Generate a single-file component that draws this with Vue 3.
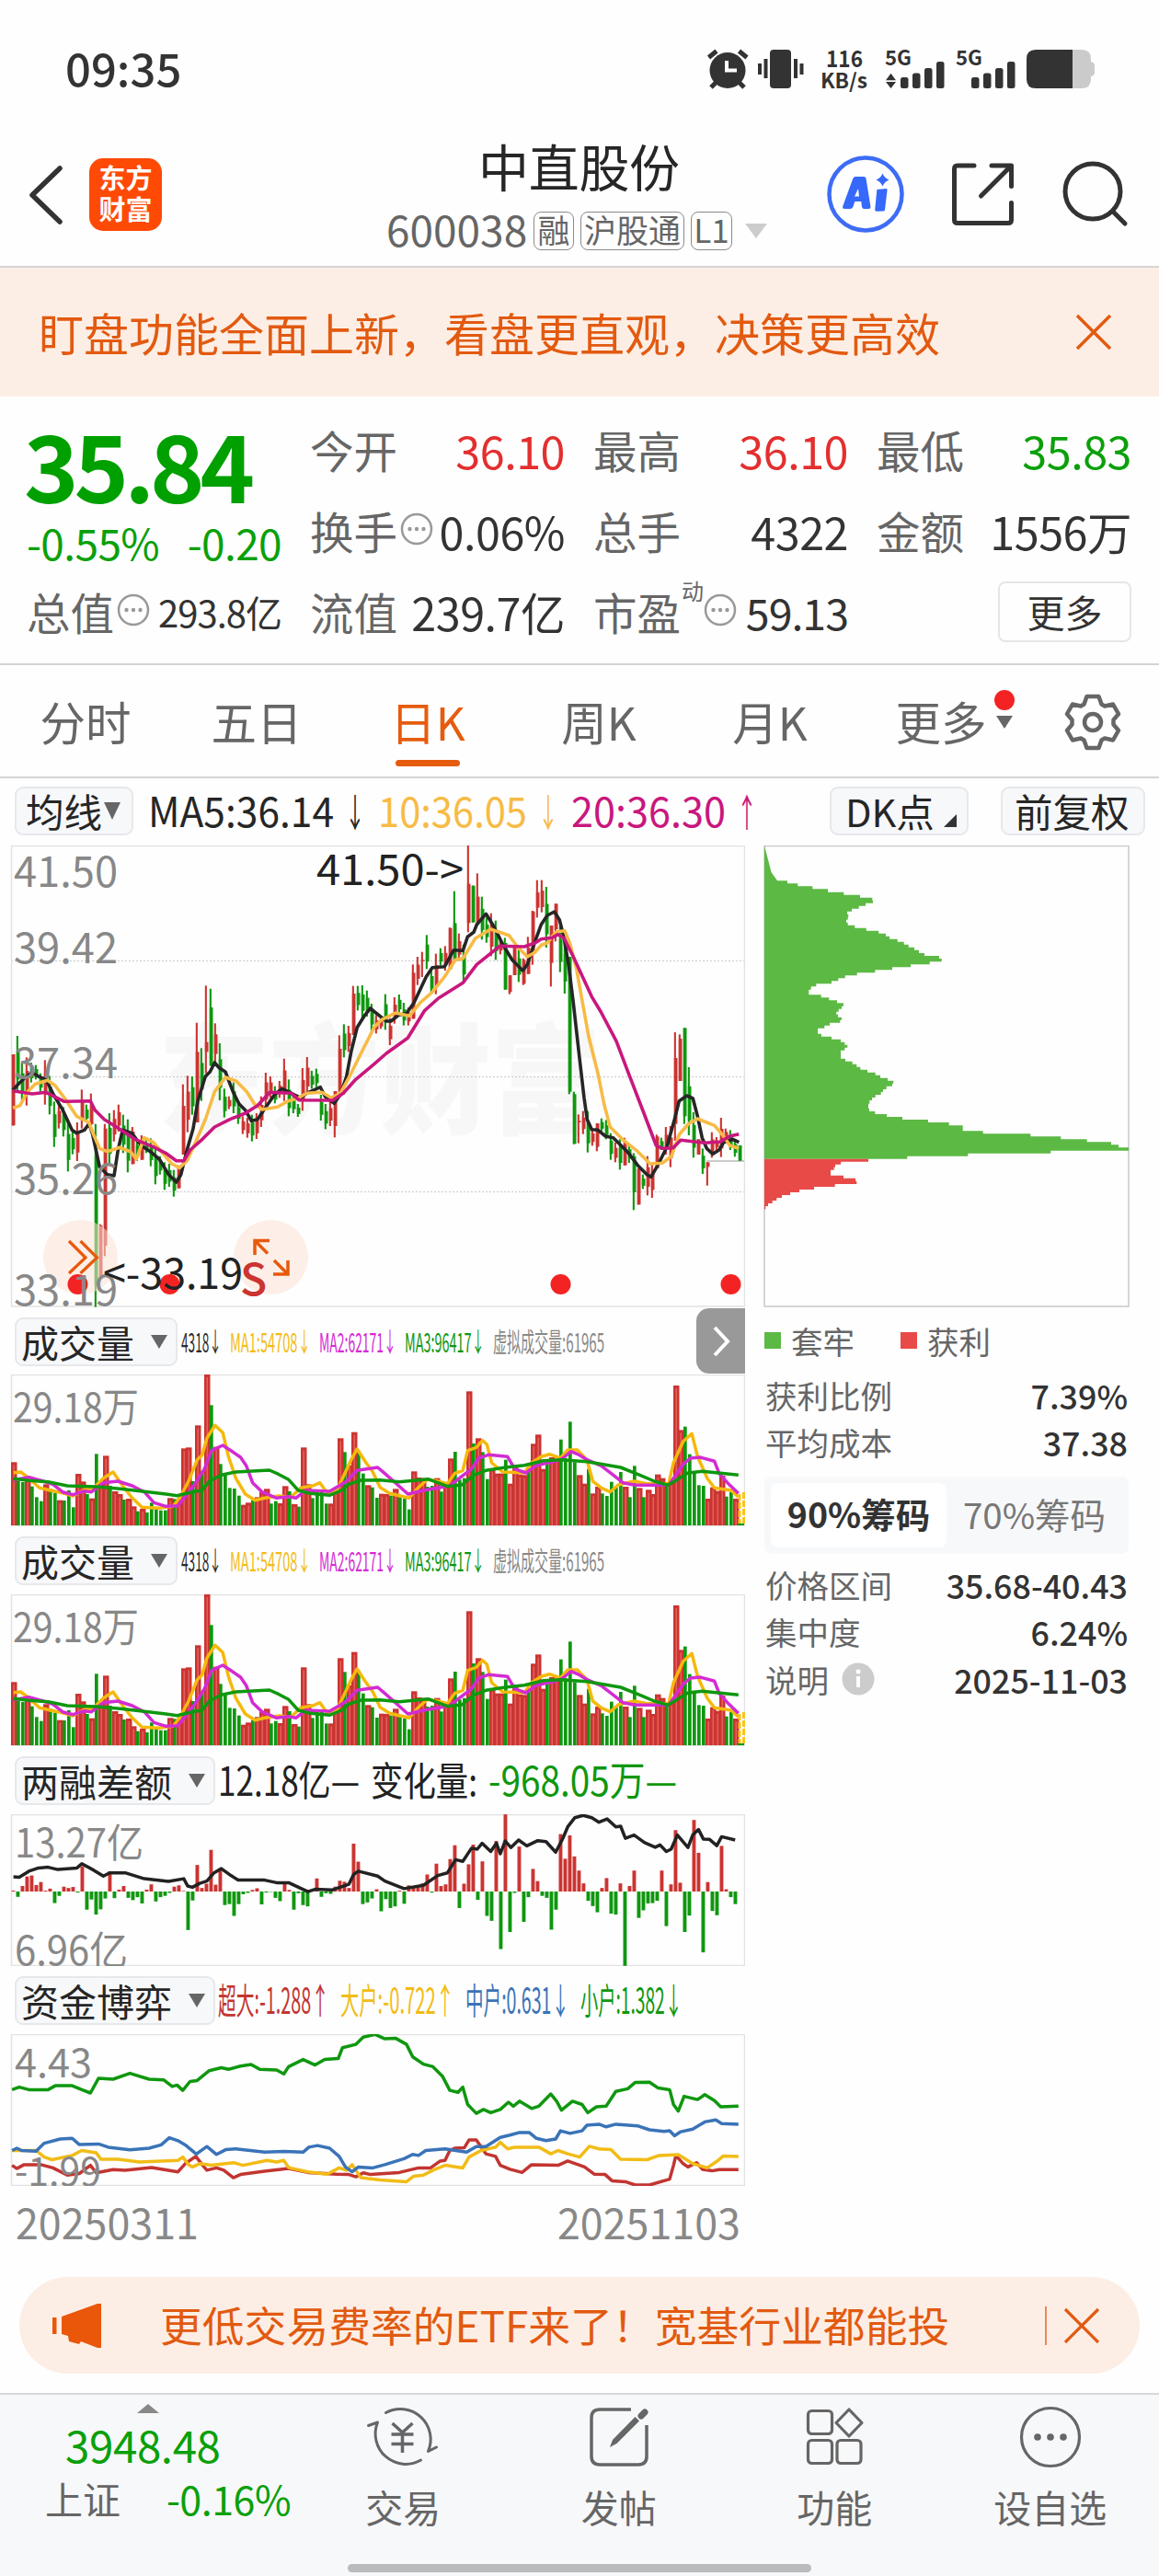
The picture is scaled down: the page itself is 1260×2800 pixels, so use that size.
<script setup>
import { h } from 'vue'

const RED = '#cb3431'
const GREEN = '#0f970f'

// Text run squeezed or stretched to an exact advance width
const Fit = (p) =>
  h('svg', { width: p.w, height: p.lh || 60, style: 'display:block;overflow:visible;flex:none' }, [
    h('text', {
      x: 0, y: p.y || 44, 'font-size': p.s, fill: p.c, 'font-weight': p.b || 400,
      textLength: p.w, lengthAdjust: 'spacingAndGlyphs'
    }, p.t)
  ])
Fit.props = ['w', 's', 'c', 't', 'b', 'y', 'lh']

const pts = (s, ox, oy, sx, sy) =>
  s.trim().split(/\s+/).map((p) => {
    const [x, y] = p.split(',').map(Number)
    return (x / sx + ox).toFixed(1) + ',' + (y / sy + oy).toFixed(1)
  }).join(' ')

/* ---- daily candles: colour high-low[:bodyTop-bodyBottom] ---- */
const candleRaw = `r708-940:708-940 g648-830 g735-858 r718-875 g735-800 g743-790 g770-830 r727-872 g778-904 g862-1010
r870-950 g880-976 g920-1090 g960-1034 r930-1056 r823-950 g872-930 r836-965 g935-1532:1040-1460 r1262-1446:1266-1440
r935-1366:950-1332 g900-1070 r890-992 r872-960 g905-1030 g920-1093 r945-1066:960-1066 g985-1056 r972-1052:1000-1052 g985-1030
g982-1073 g1010-1132 g1040-1100 g1060-1150 g1065-1140 g1085-1172 r1070-1145:1075-1145 r806-1035:876-1035 r778-962 g780-905
r605-930:700-930 g688-860 r484-770:668-700 g494-745:555-745 r607-735 g672-858 g820-914 r845-887 g800-900 g860-935
r910-968 r915-980 g905-992 r900-984 r845-945 r768-880 r780-850 g812-868 r795-850 r722-860
g790-910 g840-900 g870-912 r753-892 r717-840 g762-820 g755-815 g840-924 g870-952 r860-942
r828-979:828-942 r646-830:690-830 g610-718 r615-700 r485-645:510-645 g485-565 g483-590 g500-585 g543-630 r580-640
r590-625 g512-628 r590-678 r522-608 g513-575 g540-614 r555-614 r415-592:442-592 r390-482 r374-456:400-404
g319-430 g430-512 r380-512 g362-418 r355-435 r295-430:296-430 g176-400:280-400 r314-403 g350-475 r27-310:152-280
g158-278:158-278 r118-280:194-280 g194-334 g262-344 r248-388 g272-400 r325-382 g328-497:345-497 r450-512:450-505 r355-450:360-450
g365-472 r395-482:400-478 r325-446:360-446 r240-416:242-370 r140-262:180-230 r140-245:174-228 g162-360 r288-487:288-410 r217-340:217-300 g290-440
g330-510 g390-838:390-830 g830-1001:838-1000 r904-998:925-930 r893-968 g893-1028 r950-1006 r933-1024:933-1010 g917-960 g922-985
g965-1052 r995-1060 g985-1084 r980-1070:1000-1070 g1000-1062 g1030-1216:1040-1158 r1080-1198:1082-1198 g1100-1147 r1040-1168 r1060-1176
r970-1080:976-1080 g980-1020 r945-1035 r942-1076 r636-990:720-935 r643-795:657-795 g622-935:622-910 g750-972 g897-1045 r985-1035:985-1035
g1015-1098 r1060-1136:1060-1075 r962-1045 r978-1020 r915-1043 r950-990 g955-1020 g985-1042 g1005-1055:1005-1055`
const candles = candleRaw.trim().split(/\s+/).map((s, i) => {
  const c = s[0] === 'r' ? RED : GREEN
  const [wick, body] = s.slice(1).split(':')
  const [a, b] = wick.split('-').map(Number)
  const len = b - a
  const [p, q] = body ? body.split('-').map(Number) : [a + len * 0.28, b - len * 0.22]
  return { c, x: 14 + 5 * i, y1: 910 + a / 3, y2: 910 + b / 3, b1: 910 + p / 3, b2: 910 + q / 3 }
})
const kl = (s) => pts(s, 0, 910, 3, 3)
const ma = [
  [kl('42,825 60,805 80,785 105,768 125,780 150,790 175,840 205,890 235,955 250,965 275,955 290,935 300,960 325,1075 350,1100 372,1104 385,1020 400,955 430,965 460,1005 490,1025 520,1050 550,1100 575,1125 590,1100 610,1020 630,950 645,860 670,780 685,765 700,735 715,752 735,765 760,830 780,870 800,890 820,925 840,920 860,890 895,840 920,820 950,835 980,850 1000,835 1045,815 1060,845 1090,868 1110,840 1130,780 1145,700 1165,620 1190,580 1208,558 1220,568 1260,600 1275,600 1300,580 1325,575 1350,540 1390,455 1410,425 1450,422 1480,368 1510,370 1525,325 1545,310 1555,285 1585,250 1610,290 1640,350 1670,400 1705,435 1720,415 1745,340 1765,285 1785,255 1808,243 1825,270 1840,330 1855,420 1870,540 1890,720 1905,850 1915,920 1930,953 1950,955 1975,975 2000,980 2020,1000 2050,1030 2080,1070 2110,1100 2123,1108 2145,1070 2175,1010 2200,920 2215,860 2240,843 2260,852 2275,910 2290,980 2305,1015 2325,1033 2345,1020 2360,995 2390,985 2410,995'), '#262626'],
  [kl('42,883 65,875 90,830 115,805 155,793 180,810 210,850 250,910 290,930 305,970 325,1015 350,1025 390,1012 425,1025 445,1050 470,980 500,995 530,1030 560,1065 585,1078 610,1055 640,990 670,920 700,830 735,783 770,795 805,830 830,870 855,888 905,880 940,860 970,852 1000,835 1050,832 1080,850 1110,835 1140,780 1180,700 1220,620 1245,595 1290,573 1335,583 1370,540 1410,505 1450,455 1485,400 1510,395 1550,330 1600,300 1660,320 1690,360 1720,390 1745,375 1765,352 1785,345 1800,325 1815,308 1842,305 1860,350 1880,430 1900,540 1920,650 1950,770 1970,870 1990,945 2030,985 2080,1025 2120,1065 2160,1063 2190,1040 2215,970 2245,935 2275,918 2330,940 2360,975 2380,1005 2410,1015'), '#f7bb45'],
  [kl('42,827 105,837 150,832 210,862 295,860 310,890 340,920 380,945 440,985 500,1010 540,1030 575,1055 600,1055 620,1020 660,985 700,945 750,920 800,900 840,875 880,832 950,835 975,857 1085,858 1120,835 1160,790 1220,740 1260,705 1330,655 1385,565 1430,525 1510,475 1555,415 1630,355 1710,357 1745,345 1765,332 1800,328 1820,317 1840,330 1870,390 1930,520 1960,570 2010,665 2050,770 2100,900 2140,1005 2160,1015 2195,1013 2220,988 2300,997 2350,993 2380,975 2410,968'), '#c9177e']
]

/* ---- volume ---- */
const volRaw = `508r 570g 573g 560r 587g 622g 635g 580r 595g 608g 632r 633g 600g 655g 546r 571r 612g 626r 481g 575r
487r 585g 603r 612r 630g 627r 652r 668g 660r 672g 640g 657g 665g 665g 625r 628g 628r 463r 460r 570g
388r 538g 222r 322g 458r 514g 545g 592g 594g 617g 647r 640r 632g 622r 605r 595r 643g 635g 642r 586r
603g 645r 653g 460r 580r 625g 602g 597g 643g 643r 592r 430r 475g 518r 410r 470g 545g 583r 590g 624g
611r 612r 617g 595r 622g 627g 662g 538r 558r 560r 588g 585g 560r 604g 582r 496r 474g 565g 560g 277r
447g 430r 475g 563g 530r 545r 545r 500g 578r 520r 548r 550r 535g 448r 418r 530r 515g 492r 500r 434g
495g 376g 508g 550r 578r 530g 610r 588r 610g 618g 572g 590g 540g 588r 622g 520g 592r 622g 598r 612r
548r 560r 580g 575r 258r 403r 392g 482g 540g 583g 585g 627r 590r 602r 552r 620g 605g 627r`
const volBars = volRaw.trim().split(/\s+/).map((s, i) => {
  const up = s.endsWith('r')
  const y = 1420 + parseInt(s) / 3
  return { x: 12 + 5 * i, y, hh: 1658 - y, up }
})
const vl = (s) => pts(s, 0, 1420, 1.912, 3)
const volMa = [
  [vl('28,542 43,540 60,560 82,592 105,600 130,608 152,618 175,598 195,592 215,560 235,540 255,585 275,625 295,655 330,658 360,652 375,620 392,570 410,500 420,485 430,430 447,388 463,412 475,490 490,560 510,612 530,632 550,625 580,618 605,622 625,592 650,585 665,575 680,608 700,600 712,560 730,500 742,465 760,508 775,540 790,590 810,610 850,625 870,590 888,565 910,570 930,578 945,545 962,535 972,470 990,460 1003,437 1012,450 1022,510 1045,540 1090,542 1105,510 1125,490 1142,482 1165,495 1180,468 1200,468 1220,500 1232,570 1250,592 1268,605 1285,582 1318,570 1345,578 1390,578 1400,510 1420,440 1438,415 1450,490 1470,560 1485,592 1520,600 1535,622'), '#f5b90c'],
  [vl('28,566 60,557 90,570 110,580 130,605 152,614 175,602 190,605 215,575 245,570 275,585 300,605 320,640 345,652 370,650 390,610 405,580 425,530 440,470 463,453 480,470 500,492 512,520 525,575 545,605 575,625 600,620 615,625 635,600 685,603 705,585 720,570 742,535 785,525 800,545 825,580 848,612 880,600 935,585 955,560 980,530 995,495 1015,484 1055,490 1070,530 1093,543 1115,518 1155,505 1170,495 1187,473 1205,485 1220,500 1250,520 1275,550 1295,575 1320,583 1390,583 1405,550 1420,515 1435,495 1455,492 1485,505 1495,545 1515,580 1535,610'), '#d32bd3'],
  [vl('28,562 60,568 100,572 140,585 200,588 250,595 300,604 345,612 368,617 400,605 420,600 435,570 460,550 490,540 560,534 580,548 600,565 620,600 645,610 685,616 710,600 725,580 750,567 790,566 830,572 890,563 930,587 960,582 985,550 1010,535 1050,525 1090,518 1130,503 1165,500 1220,506 1290,525 1330,550 1360,570 1388,583 1400,572 1430,543 1460,538 1535,550'), GREEN]
]

/* ---- margin balance ---- */
const marginBars = [434,453,420,391,388,417,408,434,428,472,450,422,426,423,440,360,492,461,507,491,458,375,457,431,420,456,463,454,473,431,415,467,454,450,441,422,418,435,554,464,356,426,413,310,416,372,478,475,511,475,445,441,432,427,476,440,438,456,466,408,432,492,442,478,482,434,397,453,442,444,422,404,407,426,291,346,475,470,458,430,497,460,487,482,434,474,418,422,424,412,385,440,352,420,415,338,296,487,413,354,294,462,345,511,526,283,612,202,560,441,300,529,454,368,405,450,456,553,492,262,337,266,330,373,412,465,481,500,426,396,504,507,412,663,420,373,517,494,473,472,465,373,542,415,250,410,560,510,219,319,622,408,496,509,298,430,454,475]
  .map((v, i) => {
    const y = 1900 + v / 2.8
    const up = v < 437
    return { x: 12.5 + 5 * i, y: up ? y : 2056, hh: Math.abs(y - 2056), c: up ? RED : GREEN }
  })
const fl = (s) => pts(s, 0, 1900, 1.912, 2.8)
const marginLine = fl('28,392 40,393 60,375 80,365 100,363 120,370 160,365 170,352 195,372 215,390 228,380 260,380 300,398 350,406 382,398 390,420 400,424 415,412 430,405 445,380 460,367 480,388 495,402 550,402 575,410 600,410 640,437 655,430 690,432 725,415 735,385 745,375 785,390 800,405 840,428 880,418 910,388 930,380 947,340 962,345 980,305 992,308 1002,290 1020,315 1032,290 1040,322 1050,283 1062,303 1078,280 1095,298 1118,282 1135,285 1155,317 1170,275 1180,240 1195,212 1212,205 1230,212 1245,226 1262,216 1280,240 1290,238 1300,275 1318,265 1340,288 1362,302 1372,295 1385,315 1395,308 1408,265 1430,303 1440,265 1452,248 1462,277 1475,278 1490,297 1500,270 1528,280')

/* ---- fund flow ---- */
const fund = [
  [fl('25,1270 35,1280 50,1268 85,1268 110,1278 140,1300 165,1295 188,1270 200,1293 235,1283 260,1285 315,1277 370,1290 385,1265 407,1243 420,1268 430,1285 450,1278 465,1285 485,1308 500,1298 550,1288 600,1280 640,1292 700,1297 725,1298 740,1305 755,1293 770,1298 830,1292 870,1278 895,1278 915,1257 925,1255 935,1225 945,1218 965,1217 975,1193 990,1193 1010,1235 1030,1243 1040,1270 1060,1282 1085,1292 1105,1268 1160,1270 1180,1257 1215,1275 1235,1297 1258,1298 1272,1317 1300,1320 1320,1330 1350,1330 1392,1312 1400,1270 1405,1240 1420,1265 1430,1275 1448,1262 1460,1282 1480,1287 1495,1283 1535,1283'), '#c23531'],
  [fl('25,1225 75,1225 92,1245 108,1253 150,1240 170,1225 200,1232 210,1252 245,1252 290,1260 370,1255 380,1245 392,1268 400,1275 415,1265 440,1270 485,1262 505,1270 555,1255 575,1260 590,1255 600,1277 640,1290 680,1297 705,1278 720,1285 732,1268 750,1308 790,1315 845,1320 860,1303 880,1300 900,1285 925,1270 962,1278 975,1245 1000,1225 1030,1215 1040,1200 1055,1220 1070,1215 1120,1215 1145,1235 1160,1225 1180,1235 1205,1245 1225,1212 1245,1220 1270,1222 1290,1252 1345,1253 1370,1240 1410,1238 1440,1265 1470,1278 1490,1258 1503,1242 1535,1243'), '#f2bc16'],
  [fl('25,1225 35,1218 45,1225 75,1227 92,1203 125,1190 150,1188 165,1207 205,1205 225,1215 270,1223 310,1218 335,1208 352,1186 370,1195 385,1208 408,1236 430,1213 450,1237 470,1222 490,1220 550,1230 590,1228 630,1230 642,1215 660,1210 685,1218 705,1243 718,1275 732,1290 745,1275 775,1278 800,1268 840,1250 858,1237 870,1240 885,1225 925,1220 970,1230 990,1213 1010,1213 1040,1185 1060,1178 1080,1170 1100,1170 1115,1188 1135,1195 1155,1190 1165,1165 1185,1173 1210,1165 1220,1148 1245,1145 1260,1153 1280,1145 1325,1150 1350,1162 1380,1167 1392,1165 1402,1180 1415,1168 1440,1160 1465,1138 1488,1132 1500,1143 1535,1145'), '#3a73b8'],
  [fl('25,1040 40,1032 60,1040 100,1040 115,1028 150,1028 170,1040 188,1050 205,1005 235,1008 270,990 310,1008 340,1010 358,1030 368,1026 380,1042 395,1015 410,1012 435,982 460,973 475,978 500,968 522,963 540,978 575,980 590,992 600,970 630,948 655,965 675,948 703,945 712,912 740,902 755,880 780,872 800,885 822,883 845,902 858,940 880,962 900,970 920,1000 935,1042 952,1048 962,1032 972,1085 990,1112 1005,1100 1020,1110 1040,1100 1057,1078 1067,1090 1080,1075 1105,1097 1120,1090 1145,1053 1157,1075 1167,1102 1190,1075 1210,1085 1222,1110 1240,1092 1260,1090 1280,1045 1305,1037 1320,1018 1350,1017 1368,1035 1392,1040 1400,1085 1410,1105 1422,1060 1450,1070 1465,1055 1485,1073 1498,1092 1535,1090'), GREEN]
]

/* ---- chip distribution: bottom edge of each row, row length ---- */
const chipRaw = '151:138 160:172 169:220 179:270 188:322 197:375 206:415 215:417 224:393 233:371 242:348 251:333 260:337 269:335 278:330 287:335 296:358 305:395 314:436 323:459 332:471 341:497 350:518 359:533 368:552 378:567 387:585 396:633 406:641 415:602 424:540 433:480 442:424 451:365 460:326 469:304 478:282 487:232 497:215 514:208 523:248 532:274 541:300 551:321 560:315 569:305 578:298 587:303 596:315 605:310 614:276 623:259 641:237 650:249 659:282 668:312 677:325 686:334 695:325 722:312 731:327 740:350 749:364 758:376 767:399 776:425 785:441 794:465 803:484 812:480 822:461 831:450 840:443 849:425 858:414 869:406 885:402 894:405 903:424 912:462 921:513 930:597 940:665 958:710 967:776 976:931 985:1030 994:1115 1003:1194 1012:1218 1022:1251 1031:997 1040:727 1049:529'
const chipRedRaw = '1058:402 1067:312 1076:294 1085:290 1103:279 1112:321 1121:360 1131:364 1140:293 1149:225 1158:177 1167:147 1176:120 1185:103 1194:89 1203:75 1213:67'
const steps = (raw, y0) => {
  let d = ''
  for (const r of raw.split(' ')) {
    const [b, x] = r.split(':').map(Number)
    d += `H${(810 + x / 3).toFixed(1)}V${(910 + b / 3).toFixed(1)}`
  }
  return d + `H831V${(910 + y0 / 3).toFixed(1)}Z`
}
const chipGreen = 'M831 919L838.5 948L845 957.3' + steps(chipRaw, 28)
const chipRed = 'M831 1259.7' + steps(chipRedRaw, 1049)

const volLegend = [
  { t: '4318↓', w: 44, c: '#2b2b2b' },
  { t: 'MA1:54708↓', w: 88, c: '#f2bc16' },
  { t: 'MA2:62171↓', w: 84, c: '#d32bd3' },
  { t: 'MA3:96417↓', w: 87, c: '#0f970f' },
  { t: '虚拟成交量:61965', w: 121, c: '#888' }
]
const fundLegend = [
  { t: '超大:-1.288↑', w: 121, c: '#c23531' },
  { t: '大户:-0.722↑', w: 124, c: '#f2bc16' },
  { t: '中户:0.631↓', w: 113, c: '#3a73b8' },
  { t: '小户:1.382↓', w: 111, c: '#0f970f' }
]
const quotes = [
  ['今开', '36.10', 'up'], ['最高', '36.10', 'up'], ['最低', '35.83', 'down'],
  ['换手', '0.06%', '', 1], ['总手', '4322', ''], ['金额', '1556万', '']
]
const axis = [['41.50', 964], ['39.42', 1047], ['37.34', 1172], ['35.26', 1298], ['33.19', 1419]]
</script>

<template>
  <div class="app">
    <div class="status">
      <span class="time">09:35</span>
      <svg class="status-icons" width="426" height="60" viewBox="766 44 426 60">
        <g fill="#333">
          <circle cx="791" cy="76.500" r="19.500" />
          <g stroke="#333" stroke-width="5" fill="none">
            <path d="M770.500 62.500L779 55.500M803.500 55.500L812 62.500M780 88L773 95M802 88L809 95" />
          </g>
          <path d="M790 66v10.500h11" stroke="#fff" stroke-width="4" fill="none" />
          <rect x="837" y="54" width="23" height="42" rx="4" />
          <rect x="824" y="69" width="4" height="12" /><rect x="830.500" y="64" width="4" height="21" />
          <rect x="863" y="64" width="4" height="21" /><rect x="869.500" y="69" width="4" height="12" />
          <text x="898" y="73" font-size="25" font-weight="700" textLength="40" lengthAdjust="spacingAndGlyphs">116</text>
          <text x="892" y="96" font-size="22" font-weight="700" textLength="51" lengthAdjust="spacingAndGlyphs">KB/s</text>
          <text x="962" y="70.500" font-size="22" font-weight="700" textLength="29" lengthAdjust="spacingAndGlyphs">5G</text>
          <text x="1039" y="70.500" font-size="22" font-weight="700" textLength="29" lengthAdjust="spacingAndGlyphs">5G</text>
          <path d="M963 87.300l5.500-7.500l5.500 7.500zM963 89l5.500 7l5.500-7z" />
          <rect x="979" y="84" width="8.500" height="12" rx="2.500" /><rect x="992" y="79.500" width="8.500" height="16.500" rx="2.500" />
          <rect x="1005" y="74" width="8.500" height="22" rx="2.500" /><rect x="1018" y="67" width="8.500" height="29" rx="2.500" />
          <rect x="1056" y="84" width="8.500" height="12" rx="2.500" /><rect x="1069" y="79.500" width="8.500" height="16.500" rx="2.500" />
          <rect x="1082" y="74" width="8.500" height="22" rx="2.500" /><rect x="1095" y="67" width="8.500" height="29" rx="2.500" />
        </g>
        <path d="M1160 54h16q10 0 10 10v3q4 1 4 4v8q0 3-4 4v3q0 10-10 10h-16z" fill="#cbcbcb" />
        <path d="M1166 54h-40q-10 0-10 10v22q0 10 10 10h40z" fill="#333" />
      </svg>
    </div>

    <header class="header">
      <svg class="back" width="40" height="66" viewBox="0 0 40 66"><path d="M35 4L5 33L35 62" fill="none" stroke="#333" stroke-width="5.500" stroke-linejoin="round" stroke-linecap="round" /></svg>
      <div class="logo"><span>东方</span><span>财富</span></div>
      <div class="title-box">
        <div class="title">中直股份</div>
        <div class="code-row">
          <span class="code">600038</span>
          <span class="badge b1">融</span><span class="badge b2">沪股通</span><span class="badge b3">L1</span>
          <svg class="drop" width="26" height="18" viewBox="0 0 26 18"><path d="M1 1h24L13 17z" fill="#ccc" /></svg>
        </div>
      </div>
      <svg class="ai" width="86" height="86" viewBox="898 168 86 86">
        <circle cx="941" cy="211" r="39.500" fill="none" stroke="#3d6cf5" stroke-width="4.500" />
        <path d="M930 192h9q2 0 2.500 2l5 31q0 2-2 2h-5q-2 0-2.500-2l-.7-6h-7l-2 6q-1 2-3 2h-6q-3 0-2-3l11-30q1-2 2.700-2zM933 205l-4 8.500h5z" fill="#3668fb" />
        <path d="M953.500 206l10-1q1.500 0 1 2l-2.500 21q-.3 1.500-2 1.500l-7 .3q-2 0-1.800-2l2-20q0-2 .3-1.800z" fill="#3668fb" />
        <path d="M959.500 188.500q2 5 7 7q-5 2-7 7q-2-5-7-7q5-2 7-7z" fill="#3668fb" />
      </svg>
      <svg class="share" width="74" height="74" viewBox="1031 175 74 74" fill="none" stroke="#333" stroke-width="5" stroke-linecap="round" stroke-linejoin="round">
        <path d="M1059 180h-18q-3.500 0-3.500 3.500v55.500q0 3.500 3.500 3.500h55q3.500 0 3.500-3.500v-18.500M1078 180h21.500v22.500M1099 180.500L1066.500 213" />
      </svg>
      <svg class="search" width="74" height="74" viewBox="1154 173 74 74" fill="none" stroke="#333" stroke-width="5" stroke-linecap="round">
        <circle cx="1188" cy="208" r="30" /><path d="M1210 230L1223 243" />
      </svg>
    </header>

    <div class="notice">
      <span>盯盘功能全面上新，看盘更直观，决策更高效</span>
      <svg width="40" height="40" viewBox="0 0 40 40"><path d="M2 2L38 38M38 2L2 38" stroke="#e25a10" stroke-width="3.500" /></svg>
    </div>

    <section class="quotes">
      <div class="price-box">
        <div class="price">35.84</div>
        <div class="change"><span>-0.55%</span><span>-0.20</span></div>
      </div>
      <div v-for="q in quotes" :key="q[0]" class="cell">
        <span class="label">{{ q[0] }}</span>
        <svg v-if="q[3]" class="more-dot" width="36" height="36" viewBox="0 0 36 36"><circle cx="18" cy="18" r="16" fill="none" stroke="#999" stroke-width="2.500" /><g fill="#999"><circle cx="10.500" cy="18" r="2.200" /><circle cx="18" cy="18" r="2.200" /><circle cx="25.500" cy="18" r="2.200" /></g></svg>
        <span class="val" :class="q[2]">{{ q[1] }}</span>
      </div>
      <div class="cell">
        <span class="label">总值</span>
        <svg class="more-dot" width="36" height="36" viewBox="0 0 36 36"><circle cx="18" cy="18" r="16" fill="none" stroke="#999" stroke-width="2.500" /><g fill="#999"><circle cx="10.500" cy="18" r="2.200" /><circle cx="18" cy="18" r="2.200" /><circle cx="25.500" cy="18" r="2.200" /></g></svg>
        <span class="val small">293.8亿</span>
      </div>
      <div class="cell"><span class="label">流值</span><span class="val">239.7亿</span></div>
      <div class="cell">
        <span class="label">市盈</span><sup class="dyn">动</sup>
        <svg class="more-dot tight" width="36" height="36" viewBox="0 0 36 36"><circle cx="18" cy="18" r="16" fill="none" stroke="#999" stroke-width="2.500" /><g fill="#999"><circle cx="10.500" cy="18" r="2.200" /><circle cx="18" cy="18" r="2.200" /><circle cx="25.500" cy="18" r="2.200" /></g></svg>
        <span class="val pe">59.13</span>
      </div>
      <div class="cell end"><button class="more-btn">更多</button></div>
    </section>

    <nav class="tabs">
      <span class="tab">分时</span><span class="tab">五日</span><span class="tab active">日K</span>
      <span class="tab">周K</span><span class="tab">月K</span>
      <span class="tab more">更多<i class="dot"></i><svg class="tri" width="20" height="16" viewBox="0 0 20 16"><path d="M1 1h18L10 15z" fill="#666" /></svg></span>
      <svg class="gear" width="66" height="66" viewBox="-33 -33 66 66" fill="none" stroke="#666" stroke-width="4.500" stroke-linejoin="round">
        <path d="M-6.500 -28H6.500L9.500 -19.500L13 -17.500L22 -19.500L28 -9L22.500 -2.500V2.500L28 9L22 19.500L13 17.500L9.500 19.500L6.500 28H-6.500L-9.500 19.500L-13 17.500L-22 19.500L-28 9L-22.500 2.500V-2.500L-28 -9L-22 -19.500L-13 -17.500L-9.500 -19.500Z" />
        <circle r="9" />
      </svg>
    </nav>

    <div class="ma-row">
      <span class="pill">均线<svg width="18" height="20" viewBox="0 0 18 20"><path d="M0 1h18L9 20z" fill="#666" /></svg></span>
      <Fit class="m1" t="MA5:36.14" :w="202" :s="45" c="#262626" :y="45" /><Fit t="↓" :w="22" :s="42" c="#262626" :y="45" class="ar" />
      <Fit class="m2" t="10:36.05" :w="162" :s="45" c="#f7bb45" :y="45" /><Fit t="↓" :w="22" :s="42" c="#f7bb45" :y="45" class="ar" />
      <Fit class="m2" t="20:36.30" :w="168" :s="45" c="#c9177e" :y="45" /><Fit t="↑" :w="22" :s="42" c="#c9177e" :y="45" class="ar" />
      <span class="pill dk">DK点<svg width="14" height="14" viewBox="0 0 14 14"><path d="M14 0v14H0z" fill="#333" /></svg></span>
      <span class="pill fq">前复权</span>
    </div>

    <main class="charts">
      <div class="left">
        <svg class="k-chart" width="810" height="502" viewBox="0 919 810 502">
          <text x="172" y="1222" font-size="130" font-weight="900" fill="#f7f7f7" textLength="482" lengthAdjust="spacingAndGlyphs">东方财富</text>
          <g stroke="#c9c9c9" stroke-width="1" stroke-dasharray="2 2">
            <path d="M12 1044.500H809M12 1170.500H809M12 1295.500H809" />
          </g>
          <rect x="12.500" y="919.500" width="797" height="500.500" fill="none" stroke="#e2e2e2" stroke-width="1.500" />
          <path d="M768 1262H809" stroke="#ccc" stroke-width="2" />
          <g v-for="(c, i) in candles" :key="i" :fill="c.c">
            <rect :x="c.x - 1.200" :y="c.y1" width="2.100" :height="c.y2 - c.y1" />
            <rect :x="c.x - 1.200" :y="c.b1" width="3.700" :height="c.b2 - c.b1" />
          </g>
          <polyline v-for="m in ma" :key="m[1]" :points="m[0]" fill="none" :stroke="m[1]" stroke-width="3.600" stroke-linejoin="round" />
          <g fill="rgba(252,225,211,.55)"><circle cx="87.500" cy="1366.500" r="40.500" /><circle cx="294.500" cy="1366.500" r="40.500" /></g>
          <path d="M75 1349l18 18l-18 17M87.500 1349l18 18l-18 17" fill="none" stroke="#e8590c" stroke-width="3.200" />
          <path d="M277 1364v-15.500h16M277 1348.500l14 14M313 1370v15h-16M313 1385l-15-15" fill="none" stroke="#e8590c" stroke-width="3.500" />
          <g fill="#f42323"><circle cx="84.500" cy="1396" r="11" /><circle cx="184.500" cy="1396" r="11" /><circle cx="609.500" cy="1396" r="11" /><circle cx="794.500" cy="1396" r="11" /></g>
          <g font-size="46" fill="#888">
            <text v-for="a in axis" :key="a[0]" x="15" :y="a[1]" textLength="113" lengthAdjust="spacingAndGlyphs">{{ a[0] }}</text>
          </g>
          <g font-size="46" fill="#222">
            <text x="344" y="962" textLength="160" lengthAdjust="spacingAndGlyphs">41.50-&gt;</text>
            <text x="112" y="1401" textLength="152" lengthAdjust="spacingAndGlyphs">&lt;-33.19</text>
          </g>
          <text x="261" y="1408" font-size="48" font-weight="500" fill="#cb3431">S</text>
        </svg>

        <template v-for="n in 2" :key="n">
          <div class="ind-head">
            <span class="pill ind">成交量<svg width="18" height="15" viewBox="0 0 18 15"><path d="M0 0h18L9 15z" fill="#666" /></svg></span>
            <div class="legend">
              <Fit v-for="l in volLegend" :key="l.t" :t="l.t" :w="l.w" :s="29" :c="l.c" :y="38" />
            </div>
            <div v-if="n === 1" class="expand"><svg width="20" height="34" viewBox="0 0 20 34"><path d="M3 2L17 17L3 32" fill="none" stroke="#fff" stroke-width="4" /></svg></div>
          </div>
          <svg class="sub" width="810" height="165" viewBox="0 1494 810 165">
            <rect x="12.500" y="1494.500" width="797" height="164" fill="none" stroke="#e2e2e2" stroke-width="1.500" />
            <g v-for="(b, i) in volBars" :key="i">
              <rect v-if="b.up" :x="b.x" :y="b.y" width="6.500" :height="b.hh" fill="#cb3431" />
              <rect v-if="b.up" :x="b.x + 2.500" :y="b.y + 3" width="1.500" :height="b.hh - 3" fill="#e2605c" />
              <rect v-if="!b.up" :x="b.x + 1" :y="b.y" width="3.700" :height="b.hh" :fill="GREEN" />
            </g>
            <g fill="none" stroke="#fbc316" stroke-width="3" stroke-dasharray="7 2"><path d="M804 1624V1658M808.500 1622V1658" /></g>
            <rect x="802" y="1656" width="7" height="2" fill="#0f970f" />
            <polyline v-for="m in volMa" :key="m[1]" :points="m[0]" fill="none" :stroke="m[1]" stroke-width="3.500" stroke-linejoin="round" />
            <text x="14" y="1546" font-size="44" fill="#888" textLength="137" lengthAdjust="spacingAndGlyphs">29.18万</text>
          </svg>
        </template>

        <div class="ind-head">
          <span class="pill ind wide">两融差额<svg width="18" height="15" viewBox="0 0 18 15"><path d="M0 0h18L9 15z" fill="#666" /></svg></span>
          <div class="legend big">
            <Fit t="12.18亿—" :w="154" :s="44" c="#222" :y="45" />
            <Fit t="变化量:" :w="116" :s="43" c="#222" :y="45" />
            <Fit t="-968.05万—" :w="205" :s="44" c="#0f970f" :y="45" />
          </div>
        </div>
        <svg class="sub" width="810" height="165" viewBox="0 1972 810 165">
          <rect x="12.500" y="1972.500" width="797" height="164" fill="none" stroke="#e2e2e2" stroke-width="1.500" />
          <rect v-for="(b, i) in marginBars" :key="i" :x="b.x" :y="b.y" width="3.900" :height="b.hh" :fill="b.c" />
          <polyline :points="marginLine" fill="none" stroke="#222" stroke-width="3.500" stroke-linejoin="round" />
          <text x="16" y="2019" font-size="43" fill="#888" textLength="140" lengthAdjust="spacingAndGlyphs">13.27亿</text>
          <text x="16" y="2136" font-size="43" fill="#888" textLength="123" lengthAdjust="spacingAndGlyphs">6.96亿</text>
        </svg>

        <div class="ind-head">
          <span class="pill ind wide">资金博弈<svg width="18" height="15" viewBox="0 0 18 15"><path d="M0 0h18L9 15z" fill="#666" /></svg></span>
          <div class="legend big">
            <Fit v-for="l in fundLegend" :key="l.t" :t="l.t" :w="l.w" :s="39" :c="l.c" :y="43" />
          </div>
        </div>
        <svg class="sub" width="810" height="165" viewBox="0 2211 810 165">
          <rect x="12.500" y="2211.500" width="797" height="164" fill="none" stroke="#e2e2e2" stroke-width="1.500" />
          <polyline v-for="m in fund" :key="m[1]" :points="m[0]" fill="none" :stroke="m[1]" stroke-width="3.500" stroke-linejoin="round" />
          <text x="16" y="2258" font-size="43" fill="#888" textLength="84" lengthAdjust="spacingAndGlyphs">4.43</text>
          <text x="16" y="2376" font-size="43" fill="#888" textLength="94" lengthAdjust="spacingAndGlyphs">-1.99</text>
        </svg>
        <div class="dates"><Fit t="20250311" :w="199" :s="46" c="#888" :y="46" /><Fit t="20251103" :w="199" :s="46" c="#888" :y="46" /></div>
      </div>

      <aside class="right">
        <svg class="chips" width="400" height="502" viewBox="829 919 400 502">
          <rect x="831" y="919.500" width="396" height="500.500" fill="none" stroke="#c8c8c8" stroke-width="1.500" />
          <path :d="chipGreen" fill="#5cb944" /><path :d="chipRed" fill="#e84a48" />
        </svg>
        <div class="chip-legend"><i class="sq g"></i><span>套牢</span><i class="sq r"></i><span>获利</span></div>
        <div class="row"><span>获利比例</span><b>7.39%</b></div>
        <div class="row"><span>平均成本</span><b>37.38</b></div>
        <div class="seg"><span class="on">90%筹码</span><span class="off">70%筹码</span></div>
        <div class="row"><span>价格区间</span><b>35.68-40.43</b></div>
        <div class="row"><span>集中度</span><b>6.24%</b></div>
        <div class="row"><span class="exp">说明<svg width="36" height="36" viewBox="0 0 36 36"><circle cx="18" cy="18" r="17.500" fill="#ccc" /><circle cx="18" cy="10" r="2.500" fill="#fff" /><path d="M18 15v12" stroke="#fff" stroke-width="4" /></svg></span><b>2025-11-03</b></div>
      </aside>
    </main>

    <div class="promo">
      <svg width="56" height="50" viewBox="0 0 56 50" fill="#ea560a"><path d="M1 16h4.500v18H1zM11 15L50 1h4v48h-4l-18-7l-2 3l-11-3l-1-6l-7-2z" /></svg>
      <span class="promo-text">更低交易费率的ETF来了！宽基行业都能投</span>
      <i class="divider"></i>
      <svg width="40" height="40" viewBox="0 0 40 40"><path d="M2 2L38 38M38 2L2 38" stroke="#e25a10" stroke-width="3.200" /></svg>
    </div>

    <footer class="bottom">
      <div class="index">
        <svg width="24" height="10" viewBox="0 0 24 10"><path d="M0 10L12 0L24 10z" fill="#888" /></svg>
        <div class="idx">3948.48</div>
        <div class="idx-row"><span>上证</span><em>-0.16%</em></div>
      </div>
      <div class="item">
        <svg width="80" height="72" viewBox="399 2612 80 72" fill="none" stroke="#666" stroke-width="3" stroke-linecap="round" stroke-linejoin="round">
          <path d="M420.500 2621.500A33 33 0 0 1 466.500 2663.500l9-4.500M458.500 2673A33 33 0 0 1 411.500 2632l-10 3.500" />
          <path d="M427.500 2633l11 10l11-10M426.500 2645h24M426.500 2655.500h24M438.500 2644v21" stroke-width="3.500" stroke-linecap="butt" />
        </svg><span>交易</span>
      </div>
      <div class="item">
        <svg width="80" height="72" viewBox="633 2612 80 72" fill="none" stroke="#666" stroke-width="3.500">
          <path d="M686 2618h-34q-9 0-9 9v42q0 9 9 9h42q9 0 9-9v-34" />
          <path d="M663 2659l3-8L690.500 2626l4.500 4.500L670.500 2655z" fill="#666" stroke="none" /><path d="M697 2625L701 2621" stroke-width="7" stroke-linecap="round" />
        </svg><span>发帖</span>
      </div>
      <div class="item">
        <svg width="80" height="72" viewBox="867 2612 80 72" fill="none" stroke="#666" stroke-width="3.200" stroke-linejoin="round">
          <rect x="878.500" y="2619.500" width="26" height="25" rx="4" /><rect x="878.500" y="2651.500" width="26" height="25" rx="4" /><rect x="910" y="2651.500" width="26" height="25" rx="4" />
          <path d="M923 2618l14 14.500l-14 14.500l-14-14.500z" />
        </svg><span>功能</span>
      </div>
      <div class="item">
        <svg width="80" height="72" viewBox="-40 -36 80 72"><circle r="31.500" fill="none" stroke="#666" stroke-width="3.200" /><g fill="#666"><circle cx="-14" r="3.800" /><circle r="3.800" /><circle cx="14" r="3.800" /></g></svg><span>设自选</span>
      </div>
      <i class="home"></i>
    </footer>
  </div>
</template>

<style>
body { margin: 0; background: #fff; }
</style>
<style scoped>
.app { width: 1260px; height: 2800px; overflow: hidden; background: #fefefe; display: flex; flex-direction: column; font-family: "Noto Sans CJK SC", "Noto Sans", sans-serif; color: #333; }
.app > * { flex: none; box-sizing: border-box; }
i, em { font-style: normal; }
.status { height: 150px; padding: 0 68px 0 71px; display: flex; justify-content: space-between; }
.time { font-size: 49px; line-height: 145px; font-weight: 500; letter-spacing: 0; }
.status-icons { margin-top: 44px; }
.header { height: 141px; border-bottom: 2px solid #d4d4d4; display: flex; align-items: flex-start; padding-left: 30px; }
.back { margin-top: 29px; }
.logo { margin: 22px 0 0 27px; width: 79px; height: 79px; border-radius: 15px; background: #ff4a06; color: #fff; font-weight: 700; font-size: 29px; line-height: 34px; box-sizing: border-box; padding-top: 3px; display: flex; flex-direction: column; align-items: center; }
.title-box { width: 420px; margin-left: 244px; }
.title { font-size: 55px; line-height: 58px; color: #262626; padding-left: 100px; letter-spacing: -0.3px; }
.code-row { display: flex; align-items: center; height: 42px; margin-top: 22px; }
.code { font-size: 46px; line-height: 36px; height: 42px; color: #666; width: 160px; }
.badge { box-sizing: border-box; height: 42px; border: 1.5px solid #8a8a8a; border-radius: 8px; font-size: 35px; line-height: 35px; color: #666; text-align: center; margin-right: 7px; white-space: nowrap; }
.b1 { width: 44px; } .b2 { width: 113px; } .b3 { width: 45px; }
.drop { margin-left: 6px; }
.ai { margin: 18px 0 0 58px; }
.share { margin: 25px 0 0 47px; }
.search { margin: 23px 0 0 49px; }
.notice { height: 140px; background: #fdeee5; color: #e25a10; display: flex; align-items: center; justify-content: space-between; padding: 0 51px 0 42px; font-size: 49px; }
.notice span { line-height: 70px; margin-top: -1px; }
.quotes { height: 292px; border-bottom: 2px solid #d4d4d4; padding: 14px 0 0 29px; display: grid; grid-template-columns: repeat(4, 277px); grid-template-rows: repeat(3, 88px); column-gap: 31px; }
.price-box { grid-row: span 2; }
.price { font-size: 101px; font-weight: 700; line-height: 116px; color: #00a000; letter-spacing: -5px; margin-left: -3px; }
.change { display: flex; justify-content: space-between; color: #0aa00a; font-size: 46px; line-height: 56px; letter-spacing: -0.6px; }
.cell { display: flex; align-items: center; line-height: 60px; }
.label { font-size: 47.5px; color: #666; }
.val { font-size: 48.500px; margin-left: auto; color: #333; letter-spacing: -0.5px; white-space: nowrap; }
.val.small { font-size: 40px; letter-spacing: -1px; }
.val.pe { font-size: 46.500px; letter-spacing: -1px; }
.up { color: #e32f2f; } .down { color: #0aa00a; }
.more-dot { margin-left: 3px; margin-top: -4px; flex: none; }
.more-dot.tight { margin-left: 0; }
.dyn { font-size: 24px; line-height: 24px; color: #666; align-self: flex-start; margin: 9px 0 0 1px; }
.end { justify-content: flex-end; }
.more-btn { width: 145px; height: 66px; border: 2px solid #e6e6e6; border-radius: 8px; background: #fefefe; font: inherit; font-size: 41px; line-height: 56px; color: #333; padding: 0 0 2px; }
.tabs { height: 123px; border-bottom: 2px solid #d4d4d4; display: flex; }
.tab { width: 186px; text-align: center; font-size: 49.5px; line-height: 122px; color: #666; position: relative; }
.active { color: #e65c0e; }
.active::after { content: ""; position: absolute; left: 58px; bottom: 11px; width: 70px; height: 7px; border-radius: 4px; background: #e65c0e; }
.dot { position: absolute; left: 151px; top: 27px; width: 22px; height: 22px; border-radius: 50%; background: #f42323; }
.tri { position: absolute; left: 152px; top: 54px; }
.gear { margin: 29px 0 0 39px; }
.ma-row { height: 73px; display: flex; align-items: flex-start; padding: 9px 0 0 16px; }
.ma-row > svg { margin-top: -1px; }
.pill { box-sizing: border-box; height: 53px; border: 2px solid #e6e8eb; border-radius: 9px; background: #f7f8fa; font-size: 41.500px; line-height: 46px; color: #262626; display: flex; align-items: center; padding: 0 0 2px 10px; width: 129px; flex: none; white-space: nowrap; }
.pill svg { margin-left: 2px; margin-top: 1px; }
.m1 { margin-left: 16px; } .m2 { margin-left: 14px; } .ar { margin-left: 12px; }
.dk { width: 151px; margin-left: 79px; padding-left: 15px; }
.dk svg { margin: 22px 0 0 10px; }
.fq { width: 157px; margin-left: 35px; padding-left: 13px; }
.charts { display: flex; height: 1556px; }
.left { width: 829px; }
.left > svg { display: block; }
.ind-head { height: 74px; display: flex; padding: 11px 0 0 16px; box-sizing: border-box; position: relative; }
.k-chart + .ind-head { height: 73px; }
.ind { width: 177px; padding-left: 5px; justify-content: space-between; padding-right: 9px; font-size: 41px; }
.ind.wide { width: 218px; }
.legend { display: flex; gap: 9px; margin-left: 4px; }
.legend.big { gap: 12px; margin-left: 3px; margin-top: -2px; }
.expand { position: absolute; left: 757px; top: 1px; width: 53px; height: 71px; background: #999; border-radius: 14px 0 0 14px; display: flex; align-items: center; justify-content: center; }
.dates { display: flex; justify-content: space-between; padding: 12px 24px 0 17px; }
.right { width: 400px; }
.chips { display: block; }
.chip-legend { display: flex; align-items: center; height: 66px; padding: 3px 0 0 2px; font-size: 34.5px; color: #666; line-height: 50px; }
.sq { width: 18px; height: 18px; margin-right: 11px; } .sq.g { background: #5cb944; } .sq.r { background: #e84a48; margin-left: 50px; }
.row { display: flex; justify-content: space-between; align-items: center; height: 51.500px; padding: 0 3px; font-size: 34.5px; color: #666; }
.row b { font-weight: 500; font-size: 35.800px; color: #333; line-height: 50px; }
.seg { width: 396px; height: 84px; margin: 12px 0 7px 2px; box-sizing: border-box; padding: 7px; background: #f7f8fa; border-radius: 8px; display: flex; font-size: 38.500px; line-height: 66px; }
.on { width: 191px; background: #fff; border-radius: 8px; text-align: center; font-weight: 700; font-size: 37.500px; }
.off { width: 191px; text-align: center; color: #777; }
.exp { display: flex; align-items: center; gap: 14px; }
.promo { height: 105px; margin: 0 21px; border-radius: 53px; background: #fdeee5; color: #e25a10; display: flex; align-items: center; padding: 0 43px 0 35px; }
.promo-text { font-size: 45.800px; line-height: 66px; margin: -4px 0 0 62px; flex: 1; white-space: nowrap; }
.divider { width: 2px; height: 42px; background: #e58a5a; margin-right: 18px; }
.bottom { margin-top: 21px; height: 200px; border-top: 2px solid #d6d8da; background: #f7f8fa; display: flex; position: relative; color: #666; }
.index { width: 321px; padding: 10px 0 0 0; box-sizing: border-box; }
.index > svg { display: block; margin-left: 149px; }
.idx { margin-left: 71px; font-size: 47.500px; line-height: 60px; margin-top: 4px; color: #0aa00a; letter-spacing: -0.4px; }
.idx-row { display: flex; justify-content: space-between; padding: 0 5px 0 49px; font-size: 41px; line-height: 56px; margin-top: 0; }
.idx-row em { color: #0aa00a; font-size: 43px; letter-spacing: -0.5px; }
.item { width: 234.500px; display: flex; flex-direction: column; align-items: center; padding-top: 10px; font-size: 41px; line-height: 60px; }
.item span { margin-top: 9px; }
.home { position: absolute; left: 378px; top: 184px; width: 504px; height: 9px; border-radius: 5px; background: #babbbd; }
</style>
